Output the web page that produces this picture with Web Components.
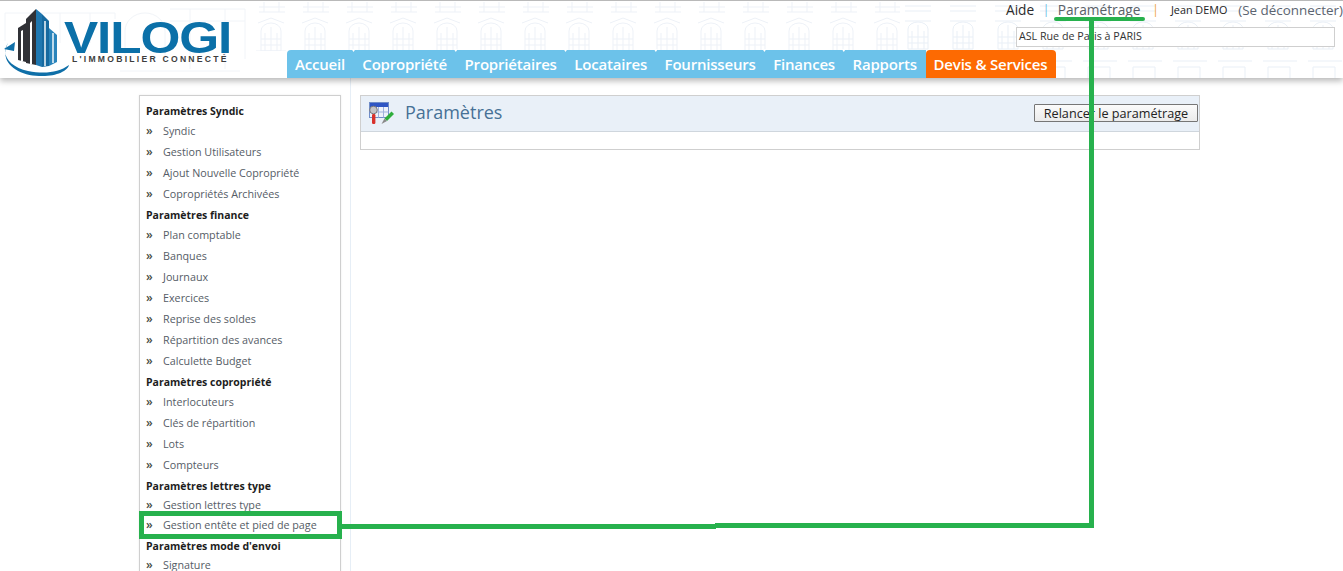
<!DOCTYPE html>
<html lang="fr"><head><meta charset="utf-8"><title>Vilogi</title>
<style>
html,body{margin:0;padding:0;height:571px;overflow:hidden;background:#fff;font-family:"Open Sans","Liberation Sans",sans-serif}
</style></head><body>
<vl-app></vl-app>
<script>
function def(name,css,html){
  customElements.define(name,class extends HTMLElement{
    constructor(){super();const r=this.attachShadow({mode:'open'});r.innerHTML='<style>'+css+'</style>'+html;}
  });
}
def('vl-logo',`:host{display:block;width:240px;height:78px;position:relative;flex:none}
svg{position:absolute;left:0;top:0}
.name{position:absolute;left:64px;top:20px;font:700 45px/34px "Liberation Sans",sans-serif;color:#0b70a8;transform-origin:0 0;transform:scaleX(1.14);letter-spacing:-1px;white-space:nowrap}
.tag{position:absolute;left:72px;top:54px;font:700 8.6px/9px "Liberation Sans",sans-serif;color:#3d3d3d;letter-spacing:2.25px;white-space:nowrap}`,
`<svg width="80" height="78" viewBox="0 0 80 78" aria-hidden="true">
<path d="M18 59V27l8-5v39z" fill="#303136"/><path d="M26 62V18l10-10v56z" fill="#303136"/>
<path d="M21 60V30l2-1v31zM30 63V22l2-2v43z" fill="#fff"/>
<path d="M36 8l6 5v53l-6-2z" fill="#1f77b0"/><path d="M42 13l7 7v45l-7 1z" fill="#16699f"/><path d="M49 27l8 7v27l-8 4z" fill="#2a84bb"/>
<path d="M45 20v45M53 32v30" stroke="#fff" stroke-width="1.4"/>
<path d="M8 42C0 54 10 66 28 70c16 3 30 2 41-6-1 6-14 12-30 11C18 74 -2 62 8 42z" fill="#0f6fa8"/>
<path d="M4 48l11-7-1 9z" fill="#0f6fa8"/>
</svg><div class="name">VILOGI</div><div class="tag">L'IMMOBILIER CONNECTÉ</div>`);

def('vl-tab',`:host{display:flex;position:relative;align-items:center;height:28px;box-sizing:border-box;padding:1px 8.8px 0;background:#6cc2ea;color:#fff;font:600 15px/27px "Open Sans",sans-serif;white-space:nowrap;letter-spacing:-.2px}
:host([first]){border-radius:4px 0 0 0;padding:1px 8.6px 0 8px}
:host([first])::after,:host([notch])::after{content:"";position:absolute;right:-2px;top:-1px;width:4px;height:3px;background:#fff;clip-path:polygon(0 0,100% 0,50% 100%);z-index:1}
:host([hot]){background:#fd6a02;border-radius:4px 4px 0 0;padding:1px 9px 0 8px}`,`<slot></slot>`);

def('vl-top-links',`:host{display:flex;align-items:center;height:18px;font:13.7px/18px "Open Sans",sans-serif;white-space:nowrap}
.aide{color:#2b2b2b;margin-left:1006px}
.s1{color:#6dbbe4;margin-left:8.5px;font-size:12px}
.p{color:#5a6168;margin-left:8.5px}
.s2{color:#f0a34a;margin-left:12px;font-size:12px}
.j{color:#222;margin-left:12px;font-size:10.8px;font-weight:500}
.d{color:#5b6470;margin-left:11px;font-size:13.4px}`,
`<span class="aide">Aide</span><span class="s1">|</span><span class="p">Paramétrage</span><span class="s2">|</span><span class="j">Jean DEMO</span><span class="d">(Se déconnecter)</span>`);

def('vl-blueprint',`:host{position:absolute;inset:0;display:block;overflow:hidden;pointer-events:none}`,
`<svg width="1343" height="78" aria-hidden="true"><defs>
<pattern id="w" x="255" y="0" width="44" height="78" patternUnits="userSpaceOnUse">
<g fill="none" stroke="#edf1f7" stroke-width="1"><path d="M6 50V30a10 8 0 0 1 20 0v20zM6 66h20M10 32v18M16 26v24M22 32v18M6 38h20M6 44h20M3 22l13-5 13 5M4 6h26M4 11h26M9 1v10M24 1v10M1 50h30"/></g></pattern>
<pattern id="v" x="900" y="0" width="45" height="78" patternUnits="userSpaceOnUse">
<g fill="none" stroke="#e9eff6" stroke-width="1"><path d="M8 48V28a10 7 0 0 1 20 0v20zM12 30v18M18 24v24M24 30v18M8 36h20M8 42h20M5 20h26M5 5h26M5 10h26M3 60h34M8 66h22v12M8 66v12"/></g></pattern>
</defs>
<g fill="none" stroke="#f1f4f8"><path d="M5 40V12h110v6M30 12v30M60 12v30M90 12v30M125 55V30a20 18 0 0 1 40 0v25M170 8h75v50M170 20h75M190 8v60M225 8v60M120 70h120"/></g>
<rect x="250" width="650" height="50" fill="url(#w)"/>
<rect x="900" width="443" height="78" fill="url(#v)"/></svg>`);

def('vl-header',`:host{display:block;position:relative;height:78px;box-sizing:border-box;border-top:1px solid #b9b9b9;background:#fff;box-shadow:0 3px 6px rgba(0,0,0,.28)}
.layer{position:relative;display:flex;height:77px}
.right{position:absolute;left:0;top:0;right:0}
.input{position:absolute;left:1016px;top:26px;width:319px;height:20px;box-sizing:border-box;border:1px solid #cfcfcf;background:#fff;font:10.7px/16px "Open Sans",sans-serif;color:#333;padding-left:2px}
.nav{position:absolute;left:287px;bottom:0;display:flex}`,
`<vl-blueprint></vl-blueprint><div class="layer"><vl-logo></vl-logo>
<vl-top-links class="right"></vl-top-links>
<div class="input">ASL Rue de Paris à PARIS</div>
<div class="nav"><vl-tab first>Accueil</vl-tab><vl-tab notch>Copropriété</vl-tab><vl-tab notch>Propriétaires</vl-tab><vl-tab notch>Locataires</vl-tab><vl-tab notch>Fournisseurs</vl-tab><vl-tab notch>Finances</vl-tab><vl-tab>Rapports</vl-tab><vl-tab hot>Devis &amp; Services</vl-tab></div></div>`);

def('vl-menu-head',`:host{display:block;height:20px;font:700 10.5px/20px "Open Sans",sans-serif;color:#1d1d1d;padding-left:6px;white-space:nowrap}`,`<slot></slot>`);
def('vl-menu-item',`:host{display:flex;height:21px;font:10.75px/21px "Open Sans",sans-serif;color:#555c66;white-space:nowrap;padding-left:6px}
:host([tight]){margin-top:-1px}
:host([last]){margin-top:3px;height:13px;line-height:13px}
i{font:normal 600 12px/20px "Open Sans",sans-serif;color:#4a4f45;width:17px;flex:none}
:host([last]) i{line-height:12px}`,`<i>»</i><slot></slot>`);

def('vl-side-menu',`:host{display:block;box-sizing:border-box;width:202px;height:520px;border:1px solid #cfcfcf;border-bottom:0;padding-top:5px;background:#fff;box-shadow:0 0 2px rgba(0,0,0,.08)}`,
`<vl-menu-head>Paramètres Syndic</vl-menu-head>
<vl-menu-item>Syndic</vl-menu-item><vl-menu-item>Gestion Utilisateurs</vl-menu-item><vl-menu-item>Ajout Nouvelle Copropriété</vl-menu-item><vl-menu-item>Copropriétés Archivées</vl-menu-item>
<vl-menu-head>Paramètres finance</vl-menu-head>
<vl-menu-item>Plan comptable</vl-menu-item><vl-menu-item>Banques</vl-menu-item><vl-menu-item>Journaux</vl-menu-item><vl-menu-item>Exercices</vl-menu-item><vl-menu-item>Reprise des soldes</vl-menu-item><vl-menu-item>Répartition des avances</vl-menu-item><vl-menu-item>Calculette Budget</vl-menu-item>
<vl-menu-head>Paramètres copropriété</vl-menu-head>
<vl-menu-item>Interlocuteurs</vl-menu-item><vl-menu-item>Clés de répartition</vl-menu-item><vl-menu-item>Lots</vl-menu-item><vl-menu-item>Compteurs</vl-menu-item>
<vl-menu-head>Paramètres lettres type</vl-menu-head>
<vl-menu-item tight>Gestion lettres type</vl-menu-item><vl-menu-item tight>Gestion entête et pied de page</vl-menu-item>
<vl-menu-head>Paramètres mode d'envoi</vl-menu-head>
<vl-menu-item last>Signature</vl-menu-item>`);

def('vl-panel',`:host{display:block;box-sizing:border-box;width:840px;height:55px;border:1px solid #cfcfcf}
.bar{display:flex;align-items:center;height:36px;box-sizing:border-box;background:#e9f0f8;border-bottom:1px solid #cfd6dd;padding-left:8px}
svg{flex:none;margin-right:11px}
h1{margin:-3px 0 0;font:400 18px/24px "Open Sans",sans-serif;color:#467196;flex:1}
button{appearance:none;width:164px;height:18px;margin:-1px 1px 0 0;padding:0;box-sizing:border-box;border:1px solid #767676;border-radius:1px;background:linear-gradient(#fbfbfb,#ebebeb);font:12.65px/16px "Open Sans",sans-serif;color:#222;text-align:center;white-space:nowrap}`,
`<div class="bar"><svg width="25" height="23" viewBox="0 0 25 23" aria-hidden="true">
<rect x=".5" y=".5" width="19" height="15" fill="#eef2fb" stroke="#6f8cc8"/><rect x="1" y="1" width="18" height="4" fill="#2f55c4"/>
<path d="M9.5 5v10.5M14.5 5v10.5" stroke="#9fb2dc"/><path d="M6 10h13.5" stroke="#9fb2dc"/>
<circle cx="4.5" cy="8" r="3.8" fill="#c4c4c8" stroke="#77777c"/><rect x="3" y="12" width="3.4" height="10" rx="1.2" fill="#d8312b"/>
<path d="M15.5 16.5l7-7 2.5 2.5-7 7z" fill="#2fae3c"/><path d="M15.5 16.5l2.5 2.5-5.5 3z" fill="#8a8a8a"/></svg>
<h1>Paramètres</h1><button type="button">Relancer le paramétrage</button></div>`);

def('vl-annotations',`:host{position:absolute;inset:0;display:block;pointer-events:none}
div{position:absolute;background:#27b14d}
.frame{left:139px;top:511px;width:193px;height:18px;border:5px solid #27b14d;background:none}`,
`<div style="left:1054px;top:17px;width:91px;height:4px;border-radius:2px"></div>
<div style="left:1089px;top:20px;width:5px;height:507px"></div>
<div style="left:715px;top:523px;width:379px;height:4.5px"></div>
<div style="left:341px;top:524px;width:375px;height:5px"></div>
<div class="frame"></div>`);

def('vl-app',`:host{display:block;position:relative;width:1343px;height:571px;overflow:hidden}
.body{display:flex;height:493px;padding-left:139px}
.side{box-sizing:content-box;width:202px;padding:17px 9px 0 0;border-right:1px solid #e6eef6}
.main{padding:17px 0 0 9px}`,
`<vl-header></vl-header><div class="body"><div class="side"><vl-side-menu></vl-side-menu></div><div class="main"><vl-panel></vl-panel></div></div><vl-annotations></vl-annotations>`);
</script></body></html>
